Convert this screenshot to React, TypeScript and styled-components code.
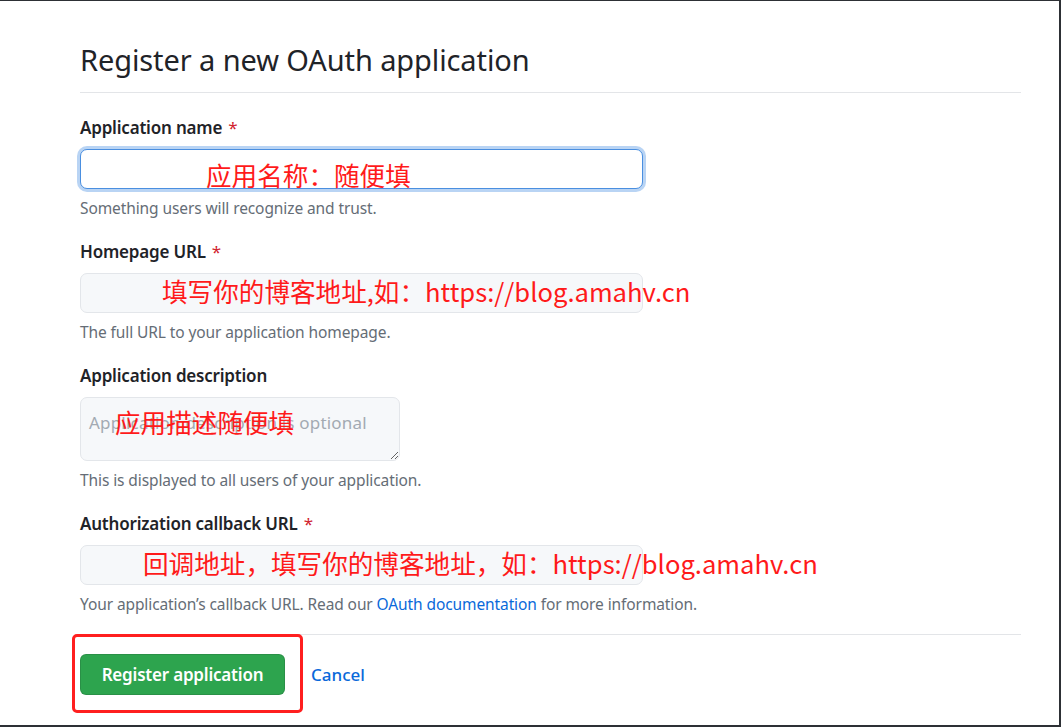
import React from "react";
import styled, { createGlobalStyle } from "styled-components";

const GlobalStyle = createGlobalStyle`
	html, body {
		margin: 0;
		padding: 0;
		background: #fff;
	}
	body {
		font-family: "Noto Sans", "Open Sans", "Liberation Sans", sans-serif;
		color: #1f2328;
	}
	* {
		box-sizing: border-box;
	}
`;

interface IField {
	label: string;
	required?: boolean;
	multiline?: boolean;
	focused?: boolean;
	placeholder?: string;
	note: React.ReactNode;
	annotation: string;
	annotationLeft: number;
	annotationShift: number;
}

const fields: IField[] = [
	{
		label: "Application name",
		required: true,
		focused: true,
		note: "Something users will recognize and trust.",
		annotation: "应用名称：随便填",
		annotationLeft: 126,
		annotationShift: 6,
	},
	{
		label: "Homepage URL",
		required: true,
		note: "The full URL to your application homepage.",
		annotation: "填写你的博客地址,如：https://blog.amahv.cn",
		annotationLeft: 82,
		annotationShift: -2,
	},
	{
		label: "Application description",
		multiline: true,
		placeholder: "Application description is optional",
		note: "This is displayed to all users of your application.",
		annotation: "应用描述随便填",
		annotationLeft: 35,
		annotationShift: -7,
	},
	{
		label: "Authorization callback URL",
		required: true,
		note: (
			<>
				Your application’s callback URL. Read our <a href="#">OAuth documentation</a> for more information.
			</>
		),
		annotation: "回调地址，填写你的博客地址，如：https://blog.amahv.cn",
		annotationLeft: 63,
		annotationShift: -2,
	},
];

const App: React.FC = () => {
	return (
		<>
			<GlobalStyle />
			<Frame>
				<Content>
					<Heading>Register a new OAuth application</Heading>
					{fields.map((field, idx) => (
						<FormGroup key={idx}>
							<Label>
								{field.label}
								{field.required && <Required>*</Required>}
							</Label>
							<InputWrap>
								{field.multiline ? (
									<TextArea placeholder={field.placeholder} />
								) : (
									<Input $focused={field.focused} />
								)}
								<Annotation $left={field.annotationLeft} $shift={field.annotationShift}>
									{field.annotation}
								</Annotation>
							</InputWrap>
							<Note>{field.note}</Note>
						</FormGroup>
					))}
					<Actions>
						<Highlight>
							<PrimaryButton type="button">Register application</PrimaryButton>
						</Highlight>
						<CancelLink href="#">Cancel</CancelLink>
					</Actions>
				</Content>
			</Frame>
		</>
	);
};

const Frame = styled.div`
	width: 1061px;
	height: 727px;
	border-top: 1px solid #2d3035;
	border-right: 2px solid #2d3035;
	border-bottom: 2px solid #2d3035;
	overflow: hidden;
`;

const Content = styled.div`
	width: 1021px;
	padding: 39px 0 0 80px;
`;

const Heading = styled.h1`
	margin: 0 0 23px;
	padding-bottom: 12px;
	border-bottom: 1px solid #e3e5e8;
	font-size: 29px;
	font-weight: 400;
	line-height: 40px;
	color: #1f2328;
	letter-spacing: -0.1px;
`;

const FormGroup = styled.div`
	margin-bottom: 22px;
`;

const Label = styled.div`
	font-size: 17px;
	font-weight: 600;
	line-height: 24px;
	color: #1f2328;
	letter-spacing: -0.2px;
`;

const Required = styled.span`
	margin-left: 6px;
	color: #d1242f;
	font-weight: 400;
`;

const InputWrap = styled.div`
	position: relative;
	margin-top: 9px;
`;

const Input = styled.input<{ $focused?: boolean }>`
	display: block;
	width: 563px;
	height: 40px;
	padding: 0 12px;
	border: 1px solid ${(props) => (props.$focused ? "#4a8fe0" : "#e3e6ea")};
	border-radius: 7px;
	background: ${(props) => (props.$focused ? "#fff" : "#f6f8fa")};
	box-shadow: ${(props) => (props.$focused ? "0 0 0 3px rgba(100,160,230,0.45)" : "none")};
	outline: none;
	font: inherit;
`;

const TextArea = styled.textarea`
	display: block;
	width: 320px;
	height: 64px;
	padding: 14px 8px;
	border: 1px solid #e3e6ea;
	border-radius: 7px;
	background: #f6f8fa;
	font-family: inherit;
	font-size: 17px;
	line-height: 22px;
	letter-spacing: 0.2px;
	outline: none;
	resize: vertical;

	&::placeholder {
		color: #a3aab2;
	}
`;

const Annotation = styled.span<{ $left: number; $shift: number }>`
	position: absolute;
	top: 50%;
	left: ${(props) => props.$left}px;
	transform: translateY(calc(-50% + ${(props) => props.$shift}px));
	white-space: nowrap;
	font-family: "Noto Sans CJK SC", "Noto Sans", sans-serif;
	font-size: 25.6px;
	line-height: 32px;
	color: #ff1a1a;
	pointer-events: none;
`;

const Note = styled.p`
	margin: 9px 0 0;
	font-size: 15.5px;
	line-height: 20px;
	color: #656d76;
	letter-spacing: -0.1px;

	a {
		color: #0969da;
		text-decoration: none;
	}
`;

const Actions = styled.div`
	display: flex;
	align-items: center;
	gap: 8px;
	margin-top: -2px;
	padding-top: 18px;
	border-top: 1px solid #e3e5e8;
`;

const Highlight = styled.div`
	margin-left: -8px;
	margin-top: -19px;
	padding: 17px 15px 15px 5px;
	border: 3px solid #ff1f1f;
	border-radius: 5px;
`;

const PrimaryButton = styled.button`
	display: block;
	width: 205px;
	height: 41px;
	border: 1px solid rgba(27,31,36,0.15);
	border-radius: 6px;
	background: #2da44e;
	color: #fff;
	font-family: inherit;
	font-size: 17px;
	font-weight: 600;
	letter-spacing: -0.2px;
	cursor: pointer;
`;

const CancelLink = styled.a`
	color: #0969da;
	font-size: 17px;
	font-weight: 500;
	text-decoration: none;
	margin-top: -18px;
`;

export default App;
